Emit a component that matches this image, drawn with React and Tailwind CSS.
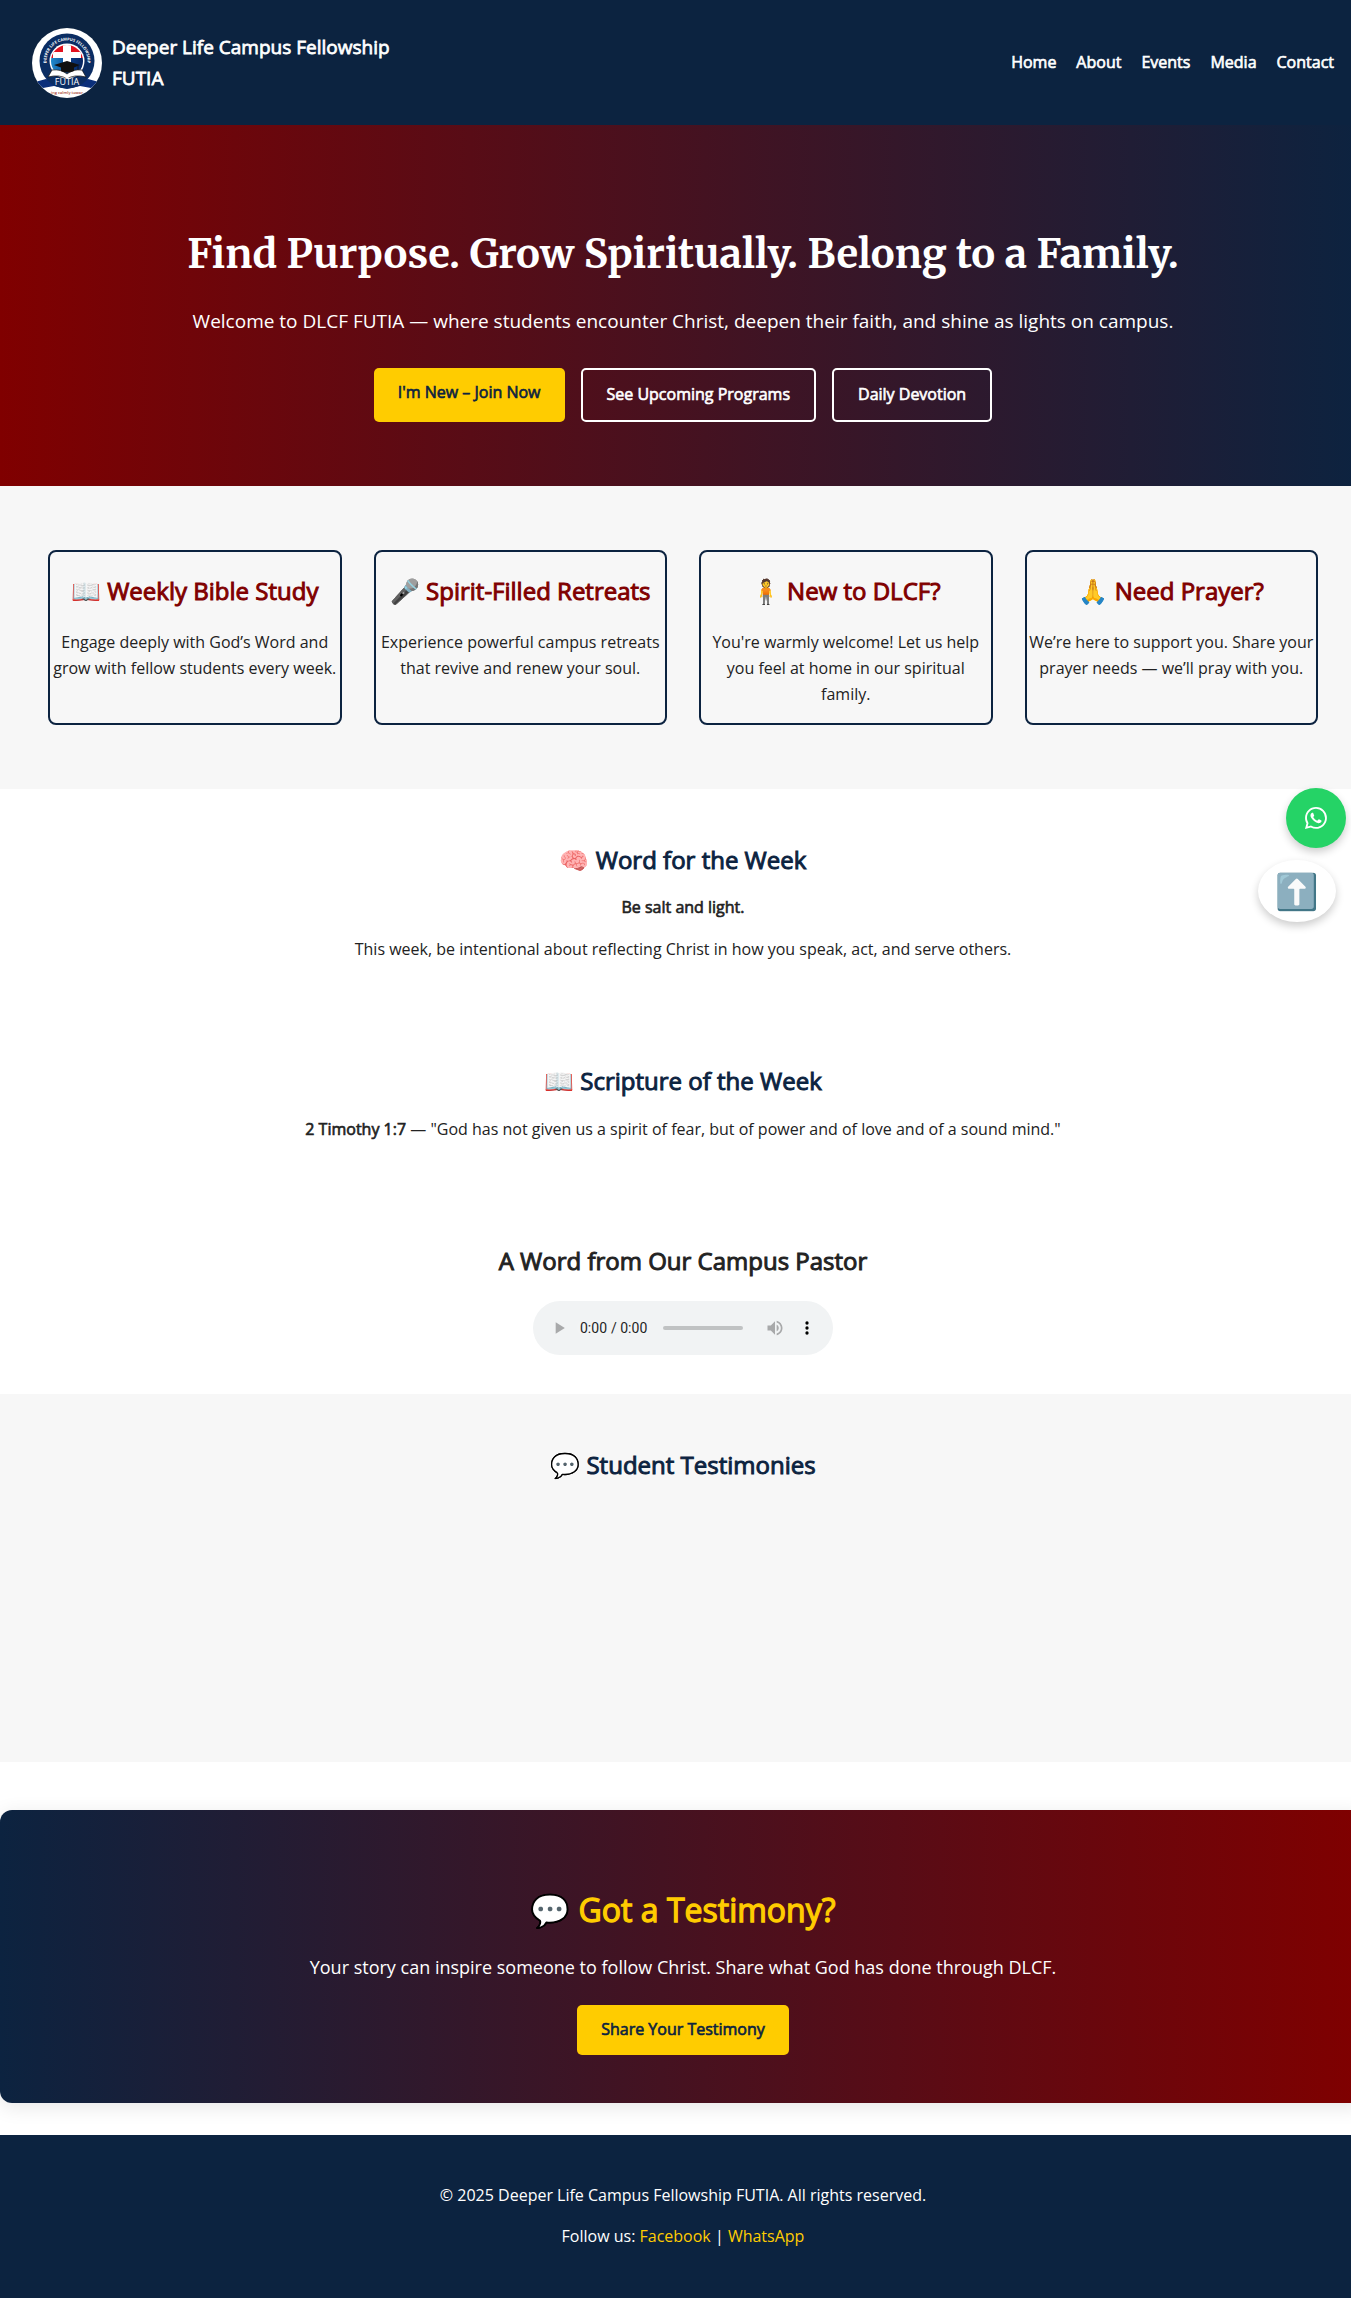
import React from "react";

const NAV = ["Home", "About", "Events", "Media", "Contact"];

const CARDS = [
  { title: "📖 Weekly Bible Study", text: "Engage deeply with God’s Word and grow with fellow students every week." },
  { title: "🎤 Spirit-Filled Retreats", text: "Experience powerful campus retreats that revive and renew your soul." },
  { title: "🧍 New to DLCF?", text: "You're warmly welcome! Let us help you feel at home in our spiritual family." },
  { title: "🙏 Need Prayer?", text: "We’re here to support you. Share your prayer needs — we’ll pray with you." },
];

// Emboldens the regular weight without changing its letter widths.
const STRONG = "font-normal [-webkit-text-stroke:0.04em_currentColor]";

function Logo() {
  return (
    <svg viewBox="0 0 70 70" className="size-[70px] shrink-0" role="img" aria-label="DLCF FUTIA logo">
      <defs>
        <clipPath id="disc"><circle cx="35" cy="35" r="35" /></clipPath>
        <clipPath id="core"><circle cx="35" cy="33" r="16" /></clipPath>
        <path id="arc" d="M16.1 41 A20.5 20.5 0 1 1 53.9 41" />
        <linearGradient id="sea" x1="0" x2="1">
          <stop offset="0" stopColor="#1f8fd0" />
          <stop offset="0.6" stopColor="#0a3c86" />
          <stop offset="1" stopColor="#06235c" />
        </linearGradient>
      </defs>
      <g clipPath="url(#disc)">
        <rect width="70" height="70" fill="#fff" />
        <path d="M3 54 L14 51 L35 57 L56 51 L67 54 L59 60 L48 58 L35 61 L22 58 L11 60 Z" fill="#0b2f7a" />
        <circle cx="35" cy="33" r="27.5" fill="#0b2d63" />
        <circle cx="35" cy="33" r="17.500" fill="#fff" />
        <g clipPath="url(#core)">
          <rect x="18" y="16" width="34" height="14" fill="#e3121f" />
          <rect x="18" y="30" width="34" height="22" fill="url(#sea)" />
          <rect x="31" y="16" width="8" height="20" fill="#fff" />
          <rect x="21" y="24" width="28" height="6" fill="#fff" />
        </g>
        <path d="M16 49 L20 42 Q29 41 35 46 Q41 41 50 42 L54 49 Q42 46 35 51 Q28 46 16 49 Z" fill="#fff" stroke="#111" strokeWidth="0.7" />
        <path d="M22 37 L35 33 L48 37 L42 39.500 V43 Q35 46 29 43 V39.500 Z" fill="#101010" />
        <path d="M46 38 V42" stroke="#101010" strokeWidth="0.8" />
        <text fontFamily="Open Sans, sans-serif" fontSize="4" fontWeight="700" fill="#fff">
          <textPath href="#arc" startOffset="50%" textAnchor="middle">DEEPER LIFE CAMPUS FELLOWSHIP</textPath>
        </text>
        <text x="35" y="57" textAnchor="middle" fontFamily="Open Sans, sans-serif" fontSize="9" fill="#fff">FUTIA</text>
        <text x="35" y="66" textAnchor="middle" fontFamily="Open Sans, sans-serif" fontSize="4" fontWeight="600" fill="#a8432f">ing calmly towar</text>
      </g>
    </svg>
  );
}

function WhatsAppIcon() {
  return (
    <svg viewBox="0 0 16 16" className="size-[22px]" fill="currentColor" aria-hidden="true">
      <path d="M13.601 2.326A7.854 7.854 0 0 0 7.994 0C3.627 0 .068 3.558.064 7.926c0 1.399.366 2.76 1.057 3.965L0 16l4.204-1.102a7.933 7.933 0 0 0 3.79.965h.004c4.368 0 7.926-3.558 7.93-7.93A7.898 7.898 0 0 0 13.6 2.326zM7.994 14.521a6.573 6.573 0 0 1-3.356-.92l-.24-.144-2.494.654.666-2.433-.156-.251a6.56 6.56 0 0 1-1.007-3.505c0-3.626 2.957-6.584 6.591-6.584a6.56 6.56 0 0 1 4.66 1.931 6.557 6.557 0 0 1 1.928 4.66c-.004 3.639-2.961 6.592-6.592 6.592z" />
      <path d="M11.61 9.585c-.197-.099-1.17-.578-1.353-.646-.182-.065-.315-.099-.445.099-.133.197-.513.646-.627.775-.114.133-.232.148-.43.05-.197-.1-.836-.308-1.592-.985-.59-.525-.985-1.175-1.103-1.372-.114-.198-.011-.304.088-.403.087-.088.197-.232.296-.346.1-.114.133-.198.198-.33.065-.134.034-.248-.015-.347-.05-.099-.445-1.076-.612-1.47-.16-.389-.323-.335-.445-.34-.114-.007-.247-.007-.38-.007a.729.729 0 0 0-.529.247c-.182.198-.691.677-.691 1.654 0 .977.71 1.916.81 2.049.098.133 1.394 2.132 3.383 2.992.47.205.84.326 1.129.418.475.152.904.129 1.246.08.38-.058 1.171-.48 1.338-.943.164-.464.164-.86.114-.943-.049-.084-.182-.133-.38-.232z" />
    </svg>
  );
}

function Heading({ children, className = "text-[#0c2340]" }) {
  return <h2 className={`${STRONG} text-2xl leading-[38px] ${className}`}>{children}</h2>;
}

export default function App() {
  return (
    <div className="overflow-hidden bg-white font-['Open_Sans','Noto_Color_Emoji',sans-serif] text-base leading-[26px] text-[#222]">
      <div className="-mr-[15px]">
        <header className="flex min-h-[125px] items-center justify-between bg-[#0c2340] px-8 text-white">
          <a href="#home" className="flex items-center gap-[10px]">
            <Logo />
            <span className={`${STRONG} max-w-[300px] text-[19px] leading-[31px]`}>Deeper Life Campus Fellowship FUTIA</span>
          </a>
          <nav className="flex gap-5 leading-[25px]">
            {NAV.map((n) => (
              <a key={n} href={`#${n.toLowerCase()}`} className={STRONG}>{n}</a>
            ))}
          </nav>
        </header>

        <section className="flex flex-col items-center bg-[linear-gradient(to_right,#800000,#0c2340)] px-8 pt-[97px] pb-16 text-center text-white">
          <h1 className="font-['Merriweather','Liberation_Serif',serif] text-[40px] leading-[64px] font-bold">
            Find Purpose. Grow Spiritually. Belong to a Family.
          </h1>
          <p className="mt-5 text-[19px] leading-[31px]">
            Welcome to DLCF FUTIA — where students encounter Christ, deepen their faith, and shine as lights on campus.
          </p>
          <div className="mt-[31px] flex gap-4">
            <a href="#join" className={`${STRONG} rounded-[5px] bg-[#ffcc00] px-6 pt-[11px] pb-[13px] text-[#0c2340]`}>I'm New – Join Now</a>
            <a href="#programs" className={`${STRONG} rounded-[5px] border-2 border-white px-6 pt-[11px] pb-[13px]`}>See Upcoming Programs</a>
            <a href="#devotion" className={`${STRONG} rounded-[5px] border-2 border-white px-6 pt-[11px] pb-[13px]`}>Daily Devotion</a>
          </div>
        </section>

        <section className="grid grid-cols-4 gap-8 bg-[#f7f7f7] px-12 py-16 text-center">
          {CARDS.map((c) => (
            <article key={c.title} className="rounded-lg border-2 border-[#0c2340] pt-5 pb-4">
              <Heading className="text-[#800000]">{c.title}</Heading>
              <p className="mt-[19px]">{c.text}</p>
            </article>
          ))}
        </section>

        <main className="relative text-center">
          <section className="px-8 pt-[52px] pb-12">
            <Heading>🧠 Word for the Week</Heading>
            <p className={`${STRONG} mt-[15px]`}>Be salt and light.</p>
            <p className="mt-4">This week, be intentional about reflecting Christ in how you speak, act, and serve others.</p>
          </section>
          <section className="px-8 pt-[52px] pb-12">
            <Heading>📖 Scripture of the Week</Heading>
            <p className="mt-4">
              <strong className={STRONG}>2 Timothy 1:7</strong> — "God has not given us a spirit of fear, but of power and of love and of a sound mind."
            </p>
          </section>
          <section className="px-8 pt-[52px] pb-[39px]">
            <Heading className="text-[#222]">A Word from Our Campus Pastor</Heading>
            <audio controls className="mx-auto mt-[21px] block" aria-label="A Word from Our Campus Pastor" />
          </section>

          <a href="#whatsapp" aria-label="Chat on WhatsApp" className="absolute -top-px right-5 flex size-[60px] items-center justify-center rounded-full bg-[#25d366] text-white shadow-[0_4px_8px_rgba(0,0,0,0.2)]">
            <WhatsAppIcon />
          </a>
          <button type="button" aria-label="Back to top" className="absolute top-[71px] right-[30px] flex h-[62px] w-[78px] items-center justify-center rounded-[50%] bg-white text-[35px] shadow-[0_4px_8px_rgba(0,0,0,0.2)]">
            ⬆️
          </button>
        </main>

        <section className="min-h-[368px] bg-[#f7f7f7] px-8 pt-[52px] text-center">
          <Heading>💬 Student Testimonies</Heading>
        </section>

        <section className="mt-12 mb-8 flex flex-col items-center rounded-xl bg-[linear-gradient(to_right,#0c2340,#800000)] px-8 pt-[74px] pb-12 text-center text-white shadow-[0_4px_20px_rgba(0,0,0,0.1)]">
          <h2 className={`${STRONG} text-[32px] leading-[51px] text-[#ffcc00]`}>💬 Got a Testimony?</h2>
          <p className="mt-[18px] text-lg leading-7">Your story can inspire someone to follow Christ. Share what God has done through DLCF.</p>
          <a href="#share" className={`${STRONG} mt-6 rounded-[5px] bg-[#ffcc00] px-6 pt-[11px] pb-[13px] text-[#0c2340]`}>Share Your Testimony</a>
        </section>

        <footer className="bg-[#0c2340] px-8 pt-[47px] pb-[50px] text-center text-white">
          <p>© 2025 Deeper Life Campus Fellowship FUTIA. All rights reserved.</p>
          <p className="mt-[15px]">
            Follow us: <a href="#facebook" className="text-[#ffcc00]">Facebook</a> | <a href="#whatsapp" className="text-[#ffcc00]">WhatsApp</a>
          </p>
        </footer>
      </div>
    </div>
  );
}
